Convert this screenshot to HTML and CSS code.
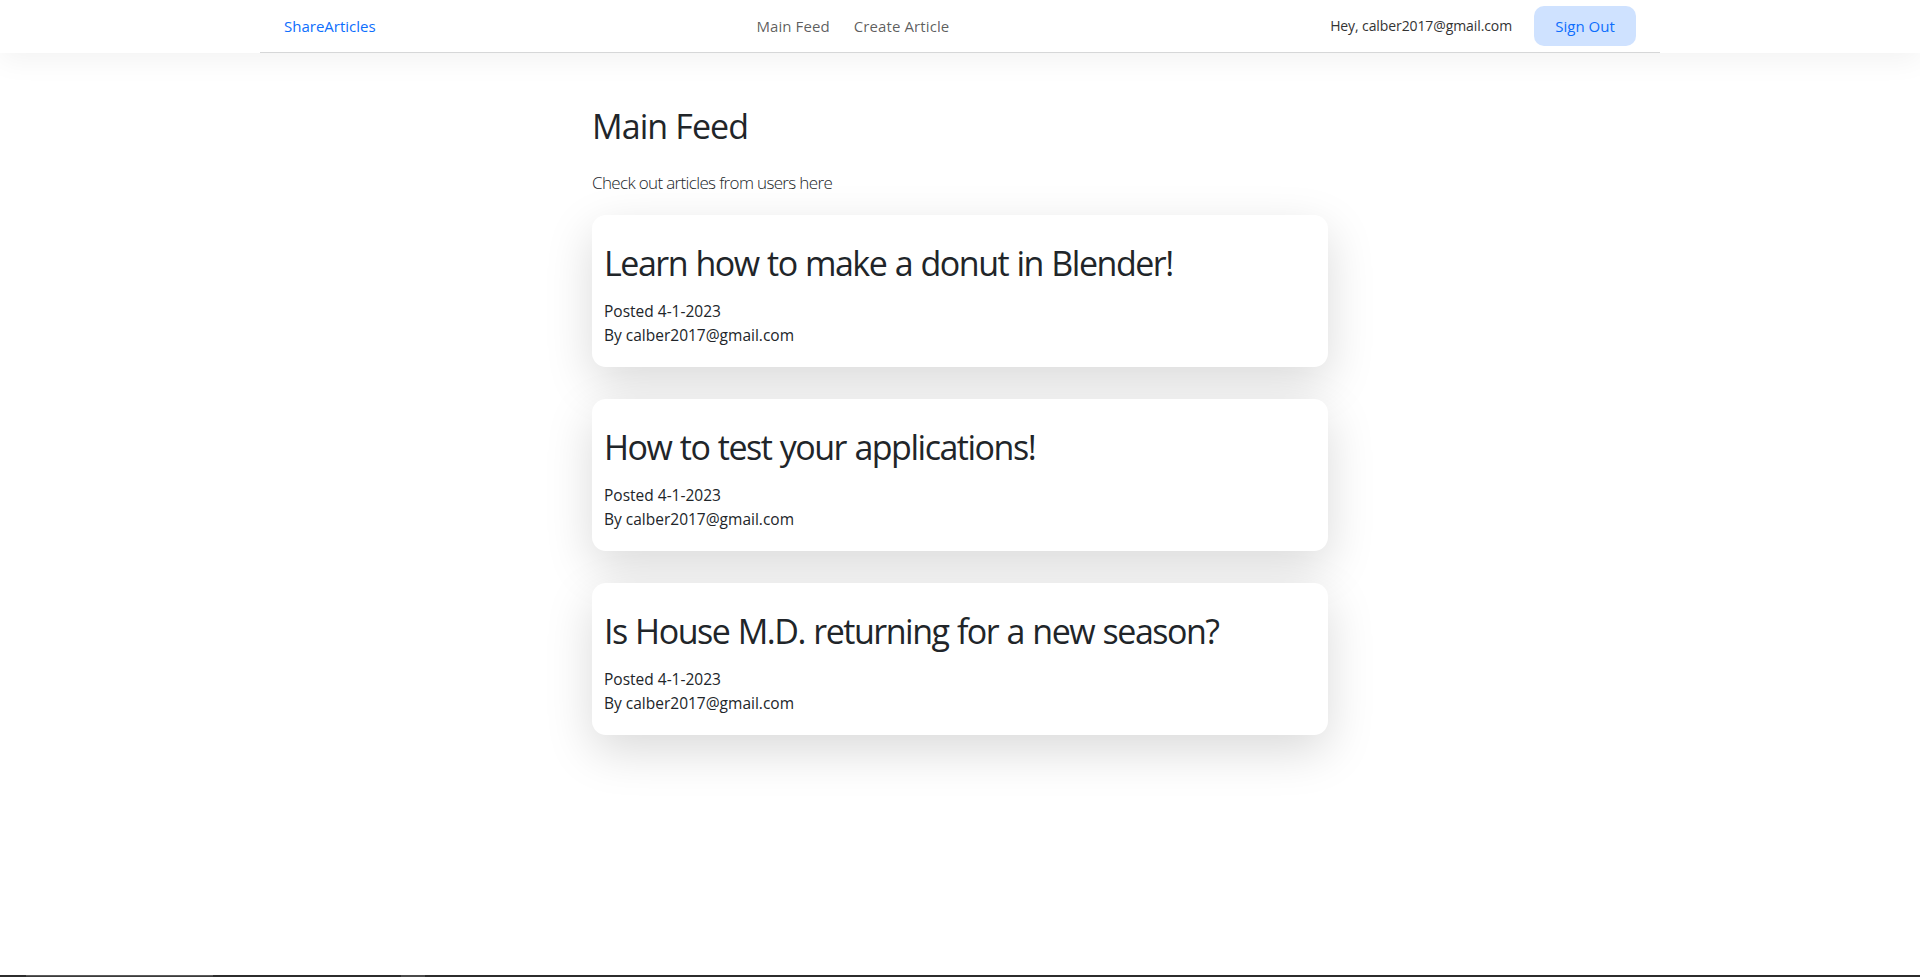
FILE: index.html
```html
<!DOCTYPE html>
<html lang="en">
<head>
<meta charset="utf-8">
<title>ShareArticles</title>
<link rel="stylesheet" href="styles.css">
</head>
<body>
<header class="site-header">
  <div class="header-inner">
    <a class="brand" href="#">ShareArticles</a>
    <nav class="nav">
      <a class="nav-link" href="#">Main Feed</a>
      <a class="nav-link" href="#">Create Article</a>
    </nav>
    <div class="user-area">
      <span class="user-text">Hey, calber2017@gmail.com</span>
      <button class="btn-signout" type="button">Sign Out</button>
    </div>
  </div>
</header>
<main class="feed">
  <h1 class="feed-title">Main Feed</h1>
  <p class="feed-lead">Check out articles from users here</p>
  <article class="card">
    <h2 class="card-title">Learn how to make a donut in Blender!</h2>
    <p class="card-meta">Posted 4-1-2023</p>
    <p class="card-meta">By calber2017@gmail.com</p>
  </article>
  <article class="card">
    <h2 class="card-title">How to test your applications!</h2>
    <p class="card-meta">Posted 4-1-2023</p>
    <p class="card-meta">By calber2017@gmail.com</p>
  </article>
  <article class="card">
    <h2 class="card-title">Is House M.D. returning for a new season?</h2>
    <p class="card-meta">Posted 4-1-2023</p>
    <p class="card-meta">By calber2017@gmail.com</p>
  </article>
</main>
<div class="taskbar">
  <span class="tb-seg tb-a"></span>
  <span class="tb-seg tb-b"></span>
  <span class="tb-seg tb-c"></span>
  <span class="tb-seg tb-d"></span>
  <span class="tb-seg tb-e"></span>
</div>
</body>
</html>
```
FILE: styles.css
```css
* { box-sizing: border-box; }
html, body { margin: 0; padding: 0; }
body {
  font-family: "Open Sans", "Noto Sans", "Liberation Sans", sans-serif;
  color: #212529;
  background: #fff;
  min-height: 977px;
}
.site-header {
  position: relative;
  z-index: 2;
  background: #fff;
  box-shadow: 0 8px 28px rgba(0, 0, 0, 0.05);
}
.header-inner {
  width: 1400px;
  margin: 0 auto;
  height: 53px;
  padding: 0 24px;
  border-bottom: 1px solid #d6d7d8;
  display: flex;
  align-items: center;
  justify-content: space-between;
}
.brand {
  color: #0d6efd;
  text-decoration: none;
  font-size: 15px;
  line-height: 24px;
}
.nav { display: flex; gap: 24px; }
.nav-link {
  color: rgba(0, 0, 0, 0.65);
  text-decoration: none;
  font-size: 15px;
  line-height: 24px;
  letter-spacing: 0.1px;
}
.user-area { display: flex; align-items: center; gap: 22px; }
.user-text { font-size: 14px; color: #333; line-height: 24px; letter-spacing: -0.1px; }
.btn-signout {
  font-family: inherit;
  font-size: 15px;
  color: #0d6efd;
  background: #cfe2ff;
  border: 0;
  border-radius: 10px;
  height: 40px;
  width: 102px;
  padding: 0;
}
.feed {
  width: 736px;
  margin: 0 auto;
  padding-top: 53px;
}
.feed-title {
  font-size: 34px;
  font-weight: 500;
  line-height: 1.2;
  margin: 0 0 22px;
  letter-spacing: -0.9px;
}
.feed-lead {
  font-size: 17px;
  font-weight: 300;
  line-height: 27px;
  margin: 0 0 19px;
  letter-spacing: -0.65px;
}
.card {
  background: #fff;
  border-radius: 14px;
  padding: 27px 12px 20px;
  margin-bottom: 32px;
  box-shadow: 0 16px 48px rgba(0, 0, 0, 0.15);
}
.card-title {
  font-size: 34px;
  font-weight: 500;
  line-height: 43px;
  margin: 0 0 14px;
  letter-spacing: -1.48px;
  word-spacing: 1px;
}
.card-meta {
  font-size: 15.5px;
  font-weight: 500;
  line-height: 24px;
  margin: 0;
}
.taskbar {
  position: fixed;
  left: 0;
  right: 0;
  bottom: 0;
  height: 2px;
  display: flex;
  background: #2c2c2c;
}
.tb-seg { height: 2px; }
.tb-a { width: 26px; background: #2c2c2c; }
.tb-b { width: 187px; background: #3c3c3c; border-top: 1px solid #5a5a5a; }
.tb-c { width: 188px; background: #2c2c2c; }
.tb-d { width: 24px; background: #4a4a4a; }
.tb-e { flex: 1; background: #2c2c2c; }
```
